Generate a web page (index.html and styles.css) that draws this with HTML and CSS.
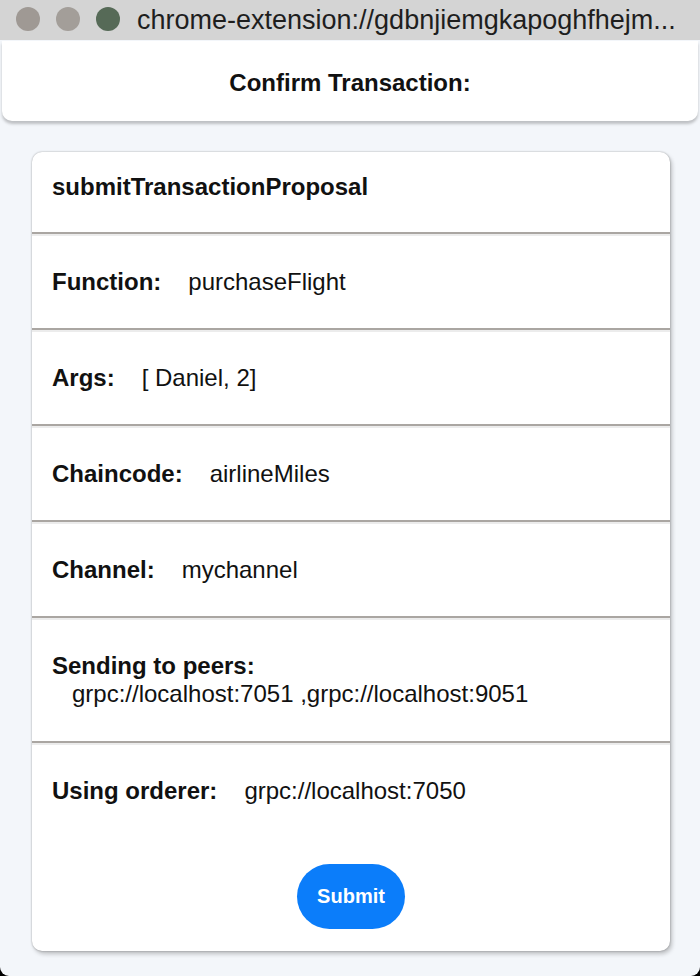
FILE: index.html
```html
<!DOCTYPE html>
<html lang="en">
<head>
<meta charset="utf-8">
<title>Confirm Transaction</title>
<link rel="stylesheet" href="styles.css">
</head>
<body>
<div class="window">
  <div class="titlebar">
    <span class="light light-close"></span>
    <span class="light light-min"></span>
    <span class="light light-max"></span>
    <span class="url">chrome-extension://gdbnjiemgkapoghfhejm...</span>
  </div>
  <header class="header">
    <h1 class="header-title">Confirm Transaction:</h1>
  </header>
  <main class="card">
    <div class="row row-title"><span class="label">submitTransactionProposal</span></div>
    <div class="row"><span class="label">Function:</span><span class="value">purchaseFlight</span></div>
    <div class="row"><span class="label">Args:</span><span class="value">[ Daniel, 2]</span></div>
    <div class="row"><span class="label">Chaincode:</span><span class="value">airlineMiles</span></div>
    <div class="row"><span class="label">Channel:</span><span class="value">mychannel</span></div>
    <div class="row row-stack"><span class="label">Sending to peers:</span><span class="value value-indent">grpc://localhost:7051 ,grpc://localhost:9051</span></div>
    <div class="row row-last">
      <div class="line"><span class="label">Using orderer:</span><span class="value">grpc://localhost:7050</span></div>
      <div class="actions"><button class="submit" type="button">Submit</button></div>
    </div>
  </main>
</div>
</body>
</html>
```
FILE: styles.css
```css
html {
  background: #000;
}
body {
  margin: 0;
  font-family: "Liberation Sans", Arial, sans-serif;
  color: #111;
}
.window {
  height: 976px;
  background: #f3f6fa;
  border-radius: 0 0 9px 9px;
  overflow: hidden;
  display: flex;
  flex-direction: column;
}
.titlebar {
  height: 40px;
  background: #d4d4d4;
  display: flex;
  align-items: center;
  padding-left: 16px;
  box-sizing: border-box;
  flex-shrink: 0;
}
.light {
  width: 24px;
  height: 24px;
  border-radius: 50%;
  margin-right: 16px;
  margin-top: -3px;
}
.light-close { background: #9f9994; }
.light-min { background: #a39e99; }
.light-max { background: #566a57; margin-right: 17px; }
.url {
  font-size: 27px;
  color: #1e1e1e;
  margin-top: 1px;
  white-space: nowrap;
}
.header {
  margin: 1px 2px 0;
  height: 80px;
  background: #fff;
  border-radius: 0 0 10px 10px;
  box-shadow: 0 3px 3px rgba(0, 0, 0, 0.22);
  display: flex;
  align-items: center;
  justify-content: center;
  flex-shrink: 0;
}
.header-title {
  margin: 0;
  font-size: 24px;
  font-weight: bold;
  line-height: 28px;
  padding-top: 4px;
}
.card {
  margin: 31px 30px 0 32px;
  background: #fff;
  border-radius: 10px;
  box-shadow: 0 0 2px rgba(0, 0, 0, 0.35), 2px 3px 4px rgba(0, 0, 0, 0.22);
  overflow: hidden;
}
.row {
  display: flex;
  align-items: baseline;
  padding: 34px 20px 32px;
  font-size: 24px;
  line-height: 28px;
  border-bottom: 2px solid #aaa6a2;
}
.row + .row {
  box-shadow: inset 0 2px 0 #ececec;
}
.row-title {
  padding: 21px 20px 31px;
}
.label {
  font-weight: bold;
  margin-right: 27px;
}
.value {
  font-weight: normal;
}
.row-stack {
  flex-direction: column;
  align-items: flex-start;
  padding-bottom: 33px;
}
.value-indent {
  margin-left: 20px;
}
.row-last {
  border-bottom: none;
  flex-direction: column;
  align-items: stretch;
  padding-bottom: 22px;
}
.line {
  display: flex;
  align-items: baseline;
}
.actions {
  display: flex;
  justify-content: center;
  margin-top: 59px;
}
.submit {
  width: 108px;
  height: 65px;
  border: none;
  border-radius: 33px;
  background: #0b7dfa;
  color: #fff;
  font-family: "Liberation Sans", Arial, sans-serif;
  font-size: 20px;
  font-weight: bold;
  padding: 0;
}
```
